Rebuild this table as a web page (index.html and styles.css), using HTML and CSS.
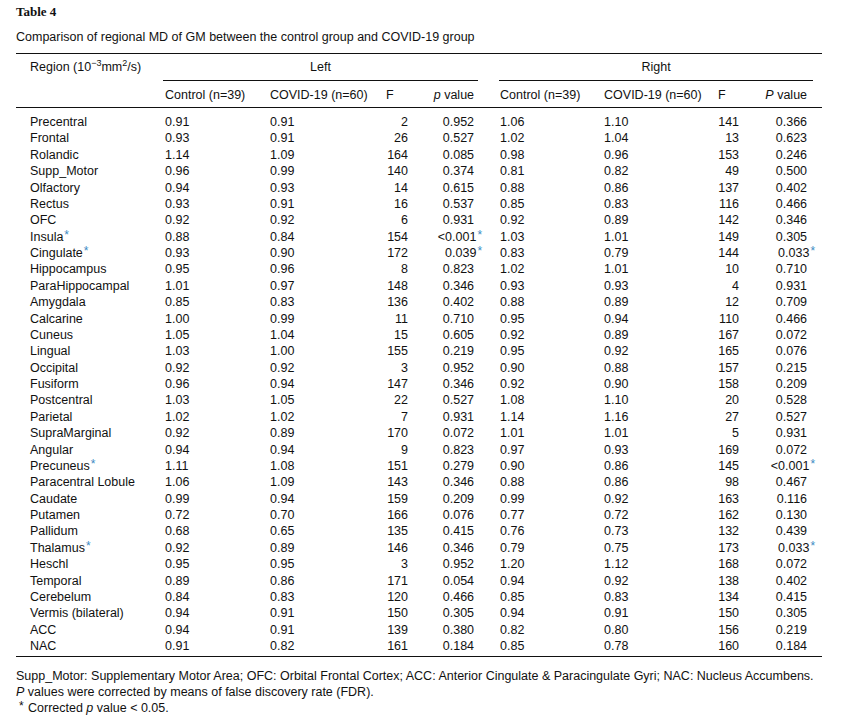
FILE: index.html
```html
<!DOCTYPE html>
<html>
<head>
<meta charset="utf-8">
<link rel="stylesheet" href="styles.css">
</head>
<body>
<div class="page">
  <div class="title">Table 4</div>
  <div class="caption">Comparison of regional MD of GM between the control group and COVID-19 group</div>
  <table class="data">
    <colgroup>
      <col class="c-region"><col class="c-ctl"><col class="c-cov"><col class="c-f"><col class="c-p">
      <col class="c-gap">
      <col class="c-ctl2"><col class="c-cov2"><col class="c-f2"><col class="c-p2"><col class="c-end">
    </colgroup>
    <thead>
      <tr class="hrow1">
        <th class="region">Region (10<sup class="exp">−3</sup>mm<sup class="exp">2</sup>/s)</th>
        <th colspan="4" class="group">Left</th>
        <th></th>
        <th colspan="4" class="group">Right</th>
        <th></th>
      </tr>
      <tr class="hrow2">
        <th></th>
        <th class="txt">Control (n=39)</th>
        <th class="txt">COVID-19 (n=60)</th>
        <th class="fh">F</th>
        <th class="num pl"><i>p</i> value</th>
        <th></th>
        <th class="txt r1">Control (n=39)</th>
        <th class="txt">COVID-19 (n=60)</th>
        <th class="fh">F</th>
        <th class="num pr"><i>P</i> value</th>
        <th></th>
      </tr>
    </thead>
    <tbody>
      <tr><td class="region">Precentral</td><td>0.91</td><td>0.91</td><td class="f">2</td><td class="num pl">0.952</td><td></td><td class="r1">1.06</td><td>1.10</td><td class="f">141</td><td class="num pr">0.366</td><td></td></tr>
      <tr><td class="region">Frontal</td><td>0.93</td><td>0.91</td><td class="f">26</td><td class="num pl">0.527</td><td></td><td class="r1">1.02</td><td>1.04</td><td class="f">13</td><td class="num pr">0.623</td><td></td></tr>
      <tr><td class="region">Rolandic</td><td>1.14</td><td>1.09</td><td class="f">164</td><td class="num pl">0.085</td><td></td><td class="r1">0.98</td><td>0.96</td><td class="f">153</td><td class="num pr">0.246</td><td></td></tr>
      <tr><td class="region">Supp_Motor</td><td>0.96</td><td>0.99</td><td class="f">140</td><td class="num pl">0.374</td><td></td><td class="r1">0.81</td><td>0.82</td><td class="f">49</td><td class="num pr">0.500</td><td></td></tr>
      <tr><td class="region">Olfactory</td><td>0.94</td><td>0.93</td><td class="f">14</td><td class="num pl">0.615</td><td></td><td class="r1">0.88</td><td>0.86</td><td class="f">137</td><td class="num pr">0.402</td><td></td></tr>
      <tr><td class="region">Rectus</td><td>0.93</td><td>0.91</td><td class="f">16</td><td class="num pl">0.537</td><td></td><td class="r1">0.85</td><td>0.83</td><td class="f">116</td><td class="num pr">0.466</td><td></td></tr>
      <tr><td class="region">OFC</td><td>0.92</td><td>0.92</td><td class="f">6</td><td class="num pl">0.931</td><td></td><td class="r1">0.92</td><td>0.89</td><td class="f">142</td><td class="num pr">0.346</td><td></td></tr>
      <tr><td class="region">Insula<sup class="ast">*</sup></td><td>0.88</td><td>0.84</td><td class="f">154</td><td class="num pl">&lt;0.001<sup class="ast hang">*</sup></td><td></td><td class="r1">1.03</td><td>1.01</td><td class="f">149</td><td class="num pr">0.305</td><td></td></tr>
      <tr><td class="region">Cingulate<sup class="ast">*</sup></td><td>0.93</td><td>0.90</td><td class="f">172</td><td class="num pl">0.039<sup class="ast hang">*</sup></td><td></td><td class="r1">0.83</td><td>0.79</td><td class="f">144</td><td class="num pr">0.033<sup class="ast hang">*</sup></td><td></td></tr>
      <tr><td class="region">Hippocampus</td><td>0.95</td><td>0.96</td><td class="f">8</td><td class="num pl">0.823</td><td></td><td class="r1">1.02</td><td>1.01</td><td class="f">10</td><td class="num pr">0.710</td><td></td></tr>
      <tr><td class="region">ParaHippocampal</td><td>1.01</td><td>0.97</td><td class="f">148</td><td class="num pl">0.346</td><td></td><td class="r1">0.93</td><td>0.93</td><td class="f">4</td><td class="num pr">0.931</td><td></td></tr>
      <tr><td class="region">Amygdala</td><td>0.85</td><td>0.83</td><td class="f">136</td><td class="num pl">0.402</td><td></td><td class="r1">0.88</td><td>0.89</td><td class="f">12</td><td class="num pr">0.709</td><td></td></tr>
      <tr><td class="region">Calcarine</td><td>1.00</td><td>0.99</td><td class="f">11</td><td class="num pl">0.710</td><td></td><td class="r1">0.95</td><td>0.94</td><td class="f">110</td><td class="num pr">0.466</td><td></td></tr>
      <tr><td class="region">Cuneus</td><td>1.05</td><td>1.04</td><td class="f">15</td><td class="num pl">0.605</td><td></td><td class="r1">0.92</td><td>0.89</td><td class="f">167</td><td class="num pr">0.072</td><td></td></tr>
      <tr><td class="region">Lingual</td><td>1.03</td><td>1.00</td><td class="f">155</td><td class="num pl">0.219</td><td></td><td class="r1">0.95</td><td>0.92</td><td class="f">165</td><td class="num pr">0.076</td><td></td></tr>
      <tr><td class="region">Occipital</td><td>0.92</td><td>0.92</td><td class="f">3</td><td class="num pl">0.952</td><td></td><td class="r1">0.90</td><td>0.88</td><td class="f">157</td><td class="num pr">0.215</td><td></td></tr>
      <tr><td class="region">Fusiform</td><td>0.96</td><td>0.94</td><td class="f">147</td><td class="num pl">0.346</td><td></td><td class="r1">0.92</td><td>0.90</td><td class="f">158</td><td class="num pr">0.209</td><td></td></tr>
      <tr><td class="region">Postcentral</td><td>1.03</td><td>1.05</td><td class="f">22</td><td class="num pl">0.527</td><td></td><td class="r1">1.08</td><td>1.10</td><td class="f">20</td><td class="num pr">0.528</td><td></td></tr>
      <tr><td class="region">Parietal</td><td>1.02</td><td>1.02</td><td class="f">7</td><td class="num pl">0.931</td><td></td><td class="r1">1.14</td><td>1.16</td><td class="f">27</td><td class="num pr">0.527</td><td></td></tr>
      <tr><td class="region">SupraMarginal</td><td>0.92</td><td>0.89</td><td class="f">170</td><td class="num pl">0.072</td><td></td><td class="r1">1.01</td><td>1.01</td><td class="f">5</td><td class="num pr">0.931</td><td></td></tr>
      <tr><td class="region">Angular</td><td>0.94</td><td>0.94</td><td class="f">9</td><td class="num pl">0.823</td><td></td><td class="r1">0.97</td><td>0.93</td><td class="f">169</td><td class="num pr">0.072</td><td></td></tr>
      <tr><td class="region">Precuneus<sup class="ast">*</sup></td><td>1.11</td><td>1.08</td><td class="f">151</td><td class="num pl">0.279</td><td></td><td class="r1">0.90</td><td>0.86</td><td class="f">145</td><td class="num pr">&lt;0.001<sup class="ast hang">*</sup></td><td></td></tr>
      <tr><td class="region">Paracentral Lobule</td><td>1.06</td><td>1.09</td><td class="f">143</td><td class="num pl">0.346</td><td></td><td class="r1">0.88</td><td>0.86</td><td class="f">98</td><td class="num pr">0.467</td><td></td></tr>
      <tr><td class="region">Caudate</td><td>0.99</td><td>0.94</td><td class="f">159</td><td class="num pl">0.209</td><td></td><td class="r1">0.99</td><td>0.92</td><td class="f">163</td><td class="num pr">0.116</td><td></td></tr>
      <tr><td class="region">Putamen</td><td>0.72</td><td>0.70</td><td class="f">166</td><td class="num pl">0.076</td><td></td><td class="r1">0.77</td><td>0.72</td><td class="f">162</td><td class="num pr">0.130</td><td></td></tr>
      <tr><td class="region">Pallidum</td><td>0.68</td><td>0.65</td><td class="f">135</td><td class="num pl">0.415</td><td></td><td class="r1">0.76</td><td>0.73</td><td class="f">132</td><td class="num pr">0.439</td><td></td></tr>
      <tr><td class="region">Thalamus<sup class="ast">*</sup></td><td>0.92</td><td>0.89</td><td class="f">146</td><td class="num pl">0.346</td><td></td><td class="r1">0.79</td><td>0.75</td><td class="f">173</td><td class="num pr">0.033<sup class="ast hang">*</sup></td><td></td></tr>
      <tr><td class="region">Heschl</td><td>0.95</td><td>0.95</td><td class="f">3</td><td class="num pl">0.952</td><td></td><td class="r1">1.20</td><td>1.12</td><td class="f">168</td><td class="num pr">0.072</td><td></td></tr>
      <tr><td class="region">Temporal</td><td>0.89</td><td>0.86</td><td class="f">171</td><td class="num pl">0.054</td><td></td><td class="r1">0.94</td><td>0.92</td><td class="f">138</td><td class="num pr">0.402</td><td></td></tr>
      <tr><td class="region">Cerebelum</td><td>0.84</td><td>0.83</td><td class="f">120</td><td class="num pl">0.466</td><td></td><td class="r1">0.85</td><td>0.83</td><td class="f">134</td><td class="num pr">0.415</td><td></td></tr>
      <tr><td class="region">Vermis (bilateral)</td><td>0.94</td><td>0.91</td><td class="f">150</td><td class="num pl">0.305</td><td></td><td class="r1">0.94</td><td>0.91</td><td class="f">150</td><td class="num pr">0.305</td><td></td></tr>
      <tr><td class="region">ACC</td><td>0.94</td><td>0.91</td><td class="f">139</td><td class="num pl">0.380</td><td></td><td class="r1">0.82</td><td>0.80</td><td class="f">156</td><td class="num pr">0.219</td><td></td></tr>
      <tr><td class="region">NAC</td><td>0.91</td><td>0.82</td><td class="f">161</td><td class="num pl">0.184</td><td></td><td class="r1">0.85</td><td>0.78</td><td class="f">160</td><td class="num pr">0.184</td><td></td></tr>
    </tbody>
  </table>
  <div class="notes">
    <p>Supp_Motor: Supplementary Motor Area; OFC: Orbital Frontal Cortex; ACC: Anterior Cingulate &amp; Paracingulate Gyri; NAC: Nucleus Accumbens.</p>
    <p><i>P</i> values were corrected by means of false discovery rate (FDR).</p>
    <p class="star"><span class="star-mark">*</span>Corrected <i>p</i> value &lt; 0.05.</p>
  </div>
</div>
</body>
</html>
```

FILE: styles.css
```css
body {
  margin: 0;
  background: #ffffff;
  color: #111111;
  font-family: "Liberation Sans", Arial, sans-serif;
  font-size: 12.5px;
}

.page {
  width: 806px;
  padding: 4px 16px 0 16px;
}

.title {
  font-family: "Liberation Serif", "Times New Roman", serif;
  font-size: 13px;
  font-weight: bold;
  line-height: 16px;
}

.caption {
  margin-top: 9px;
  line-height: 16px;
}

.data {
  margin-top: 8px;
  width: 806px;
  table-layout: fixed;
  border-collapse: separate;
  border-spacing: 0;
  border-top: 1px solid #111;
  border-bottom: 1px solid #111;
}

.c-region { width: 147px; }
.c-ctl { width: 105px; }
.c-cov { width: 112px; }
.c-f { width: 30px; }
.c-p { width: 68px; }
.c-gap { width: 21px; }
.c-ctl2 { width: 103px; }
.c-cov2 { width: 110px; }
.c-f2 { width: 29px; }
.c-p2 { width: 72px; }
.c-end { width: 9px; }

.data th,
.data td {
  padding: 0 0 0 2px;
  font-weight: normal;
  text-align: left;
  line-height: 16.375px;
  white-space: nowrap;
  vertical-align: middle;
}

.hrow1 th {
  padding-top: 5px;
  padding-bottom: 5px;
  line-height: 16px;
  border-bottom: 1px solid transparent;
}

.hrow1 th.group {
  text-align: center;
  padding-left: 0;
  border-bottom-color: #111;
}

.hrow2 th {
  padding-top: 6px;
  padding-bottom: 4px;
  line-height: 16px;
  border-bottom: 1px solid #111;
}

.data .region {
  padding-left: 14px;
}

.data .r1 {
  padding-left: 1px;
}

.data .f {
  text-align: right;
  padding-left: 0;
  padding-right: 2px;
}

.data .fh {
  padding-left: 6px;
}

.data .num {
  text-align: right;
  padding-left: 0;
}

.data .pl { padding-right: 4px; }
.data .pr { padding-right: 6px; }

tbody tr:first-child td { padding-top: 6px; }
tbody tr:last-child td { padding-bottom: 2px; }

.exp {
  font-size: 9px;
  line-height: 0;
  vertical-align: 5px;
}

.ast {
  color: #3d8bc4;
  font-size: 12px;
  line-height: 0;
  vertical-align: 2px;
  margin-left: 1px;
}

.ast.hang {
  margin-right: -8px;
}

.notes {
  margin-top: 11px;
}

.notes p {
  margin: 0;
  line-height: 16px;
}

.notes .star {
  padding-left: 3px;
  line-height: 17px;
}

.star-mark {
  display: inline-block;
  width: 9px;
  font-size: 12px;
  vertical-align: 2px;
  line-height: 0;
}
```
